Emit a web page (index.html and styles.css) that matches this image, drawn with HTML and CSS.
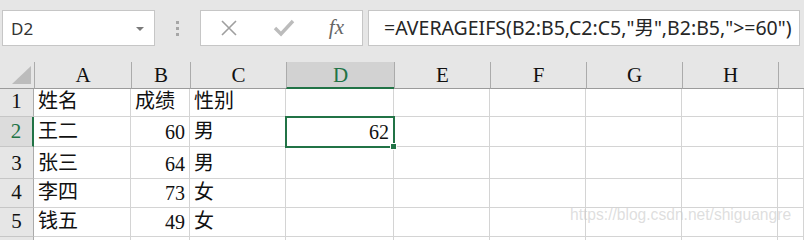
FILE: index.html
```html
<!DOCTYPE html>
<html lang="zh-CN">
<head>
    <meta charset="UTF-8">
    <title>AVERAGEIFS</title>
    <link rel="stylesheet" href="styles.css">
</head>
<body>
    <div class="toolbar">
        <div class="name-box">
            <span>D2</span>
            <span class="drop-arrow"></span>
        </div>
        <div class="grip">
            <span></span><span></span><span></span>
        </div>
        <div class="fx-buttons">
            <svg class="btn-icon" width="20" height="20" viewBox="0 0 20 20">
                <path d="M3 3 L17 17 M17 3 L3 17" stroke="#9f9f9f" stroke-width="1.6" fill="none"/>
            </svg>
            <svg class="btn-icon" width="22" height="20" viewBox="0 0 22 20">
                <path d="M2 10 L8 16 L20 3" stroke="#bcbcbc" stroke-width="3.4" fill="none"/>
            </svg>
            <span class="fx">fx</span>
        </div>
        <div class="formula">=AVERAGEIFS(B2:B5,C2:C5,"男",B2:B5,"&gt;=60")</div>
    </div>

    <div class="sheet">
        <div class="corner"><span class="corner-tri"></span></div>
        <div class="col-head">A</div>
        <div class="col-head">B</div>
        <div class="col-head">C</div>
        <div class="col-head active">D</div>
        <div class="col-head">E</div>
        <div class="col-head">F</div>
        <div class="col-head">G</div>
        <div class="col-head">H</div>
        <div class="col-head"></div>

        <div class="row-head">1</div>
        <div class="cell">姓名</div>
        <div class="cell">成绩</div>
        <div class="cell">性别</div>
        <div class="cell"></div>
        <div class="cell"></div><div class="cell"></div><div class="cell"></div><div class="cell"></div><div class="cell"></div>

        <div class="row-head active">2</div>
        <div class="cell">王二</div>
        <div class="cell num">60</div>
        <div class="cell">男</div>
        <div class="cell num selected">62<span class="fill-handle"></span></div>
        <div class="cell"></div><div class="cell"></div><div class="cell"></div><div class="cell"></div><div class="cell"></div>

        <div class="row-head">3</div>
        <div class="cell">张三</div>
        <div class="cell num">64</div>
        <div class="cell">男</div>
        <div class="cell"></div>
        <div class="cell"></div><div class="cell"></div><div class="cell"></div><div class="cell"></div><div class="cell"></div>

        <div class="row-head">4</div>
        <div class="cell">李四</div>
        <div class="cell num">73</div>
        <div class="cell">女</div>
        <div class="cell"></div>
        <div class="cell"></div><div class="cell"></div><div class="cell"></div><div class="cell"></div><div class="cell"></div>

        <div class="row-head">5</div>
        <div class="cell">钱五</div>
        <div class="cell num">49</div>
        <div class="cell">女</div>
        <div class="cell"></div>
        <div class="cell"></div><div class="cell"></div><div class="cell"></div><div class="cell"></div><div class="cell"></div>

        <div class="row-head stub"></div>
        <div class="cell stub"></div><div class="cell stub"></div><div class="cell stub"></div><div class="cell stub"></div>
        <div class="cell stub"></div><div class="cell stub"></div><div class="cell stub"></div><div class="cell stub"></div><div class="cell stub"></div>

        <div class="watermark">https://blog.csdn.net/shiguangre</div>
    </div>
</body>
</html>
```

FILE: styles.css
```css
body {
    margin: 0;
    height: 240px;
    background: #e6e6e6;
    font-family: "Noto Sans", "Noto Sans CJK SC", sans-serif;
    color: #262626;
    overflow: hidden;
}

/* formula bar */
.toolbar {
    display: flex;
    align-items: flex-start;
    height: 62px;
    padding: 10px 0 0 2px;
    box-sizing: border-box;
}

.name-box {
    width: 153px;
    height: 36px;
    box-sizing: border-box;
    background: white;
    border: 1px solid #c6c6c6;
    display: flex;
    align-items: center;
    justify-content: space-between;
    padding: 0 10px 0 8px;
    font-size: 17px;
    color: #333;
}

.drop-arrow {
    width: 0;
    height: 0;
    border-left: 4px solid transparent;
    border-right: 4px solid transparent;
    border-top: 4px solid #7a7a7a;
    margin-top: 1px;
}

.grip {
    width: 45px;
    height: 36px;
    display: flex;
    flex-direction: column;
    align-items: center;
    justify-content: center;
    gap: 3px;
}

.grip span {
    width: 3px;
    height: 3px;
    background: #a6a6a6;
}

.fx-buttons {
    width: 163px;
    height: 36px;
    box-sizing: border-box;
    background: white;
    border: 1px solid #c6c6c6;
    display: flex;
    align-items: center;
    justify-content: space-between;
    padding: 0 18px 0 18px;
}

.fx {
    font-family: "Liberation Serif", serif;
    font-style: italic;
    font-size: 21px;
    color: #666;
    margin-top: -2px;
}

.formula {
    flex: 1;
    height: 36px;
    box-sizing: border-box;
    margin: 0 4px 0 5px;
    background: white;
    border: 1px solid #c6c6c6;
    padding: 0 0 0 15px;
    font-size: 19.5px;
    line-height: 33px;
    color: #262626;
    white-space: nowrap;
    overflow: hidden;
}

/* grid */
.sheet {
    position: relative;
    display: grid;
    grid-template-columns: 34px 97px 59px 96px 108px 96px 96px 96px 96px 1fr;
    grid-template-rows: 27px 28px 30px 32px 29px 29px 3px;
    background: white;
}

.corner, .col-head, .row-head {
    background: #e6e6e6;
    box-sizing: border-box;
    font-family: "Liberation Serif", "Noto Sans CJK SC", serif;
    color: #111;
}

.corner {
    border-bottom: 1px solid #9b9b9b;
    position: relative;
}

.corner-tri {
    position: absolute;
    right: 3px;
    bottom: 4px;
    width: 0;
    height: 0;
    border-left: 19px solid transparent;
    border-bottom: 18px solid #bcbcbc;
}

.col-head {
    border-left: 1px solid #ababab;
    border-bottom: 1px solid #9b9b9b;
    text-align: center;
    font-size: 21px;
    line-height: 27px;
}

.col-head.active {
    background: #d2d2d2;
    border-bottom: 2px solid #217346;
    color: #217346;
}

.row-head {
    border-bottom: 1px solid #c6c6c6;
    border-right: 1px solid #ababab;
    text-align: center;
    font-size: 21px;
    display: flex;
    align-items: flex-end;
    justify-content: center;
    padding-bottom: 2px;
}

.row-head.active {
    background: #dcdcdc;
    border-right: 2px solid #217346;
    color: #217346;
}

.cell {
    border-right: 1px solid #d4d4d4;
    border-bottom: 1px solid #d4d4d4;
    box-sizing: border-box;
    font-family: "Liberation Serif", "Noto Sans CJK SC", serif;
    font-size: 20px;
    color: #111;
    padding: 0 4px 2px 4px;
    display: flex;
    align-items: flex-end;
    white-space: nowrap;
}

.cell.num {
    justify-content: flex-end;
}

.row-head.stub, .cell.stub {
    border-bottom: none;
}

.cell.selected {
    position: relative;
    outline: 2px solid #217346;
    outline-offset: -1px;
    z-index: 1;
}

.fill-handle {
    position: absolute;
    right: -4px;
    bottom: -4px;
    width: 5px;
    height: 5px;
    background: #217346;
    border: 1px solid white;
}

.watermark {
    position: absolute;
    left: 570px;
    top: 144px;
    font-family: "Liberation Sans", sans-serif;
    font-size: 15.6px;
    color: rgba(200, 200, 200, 0.6);
    pointer-events: none;
}
```
